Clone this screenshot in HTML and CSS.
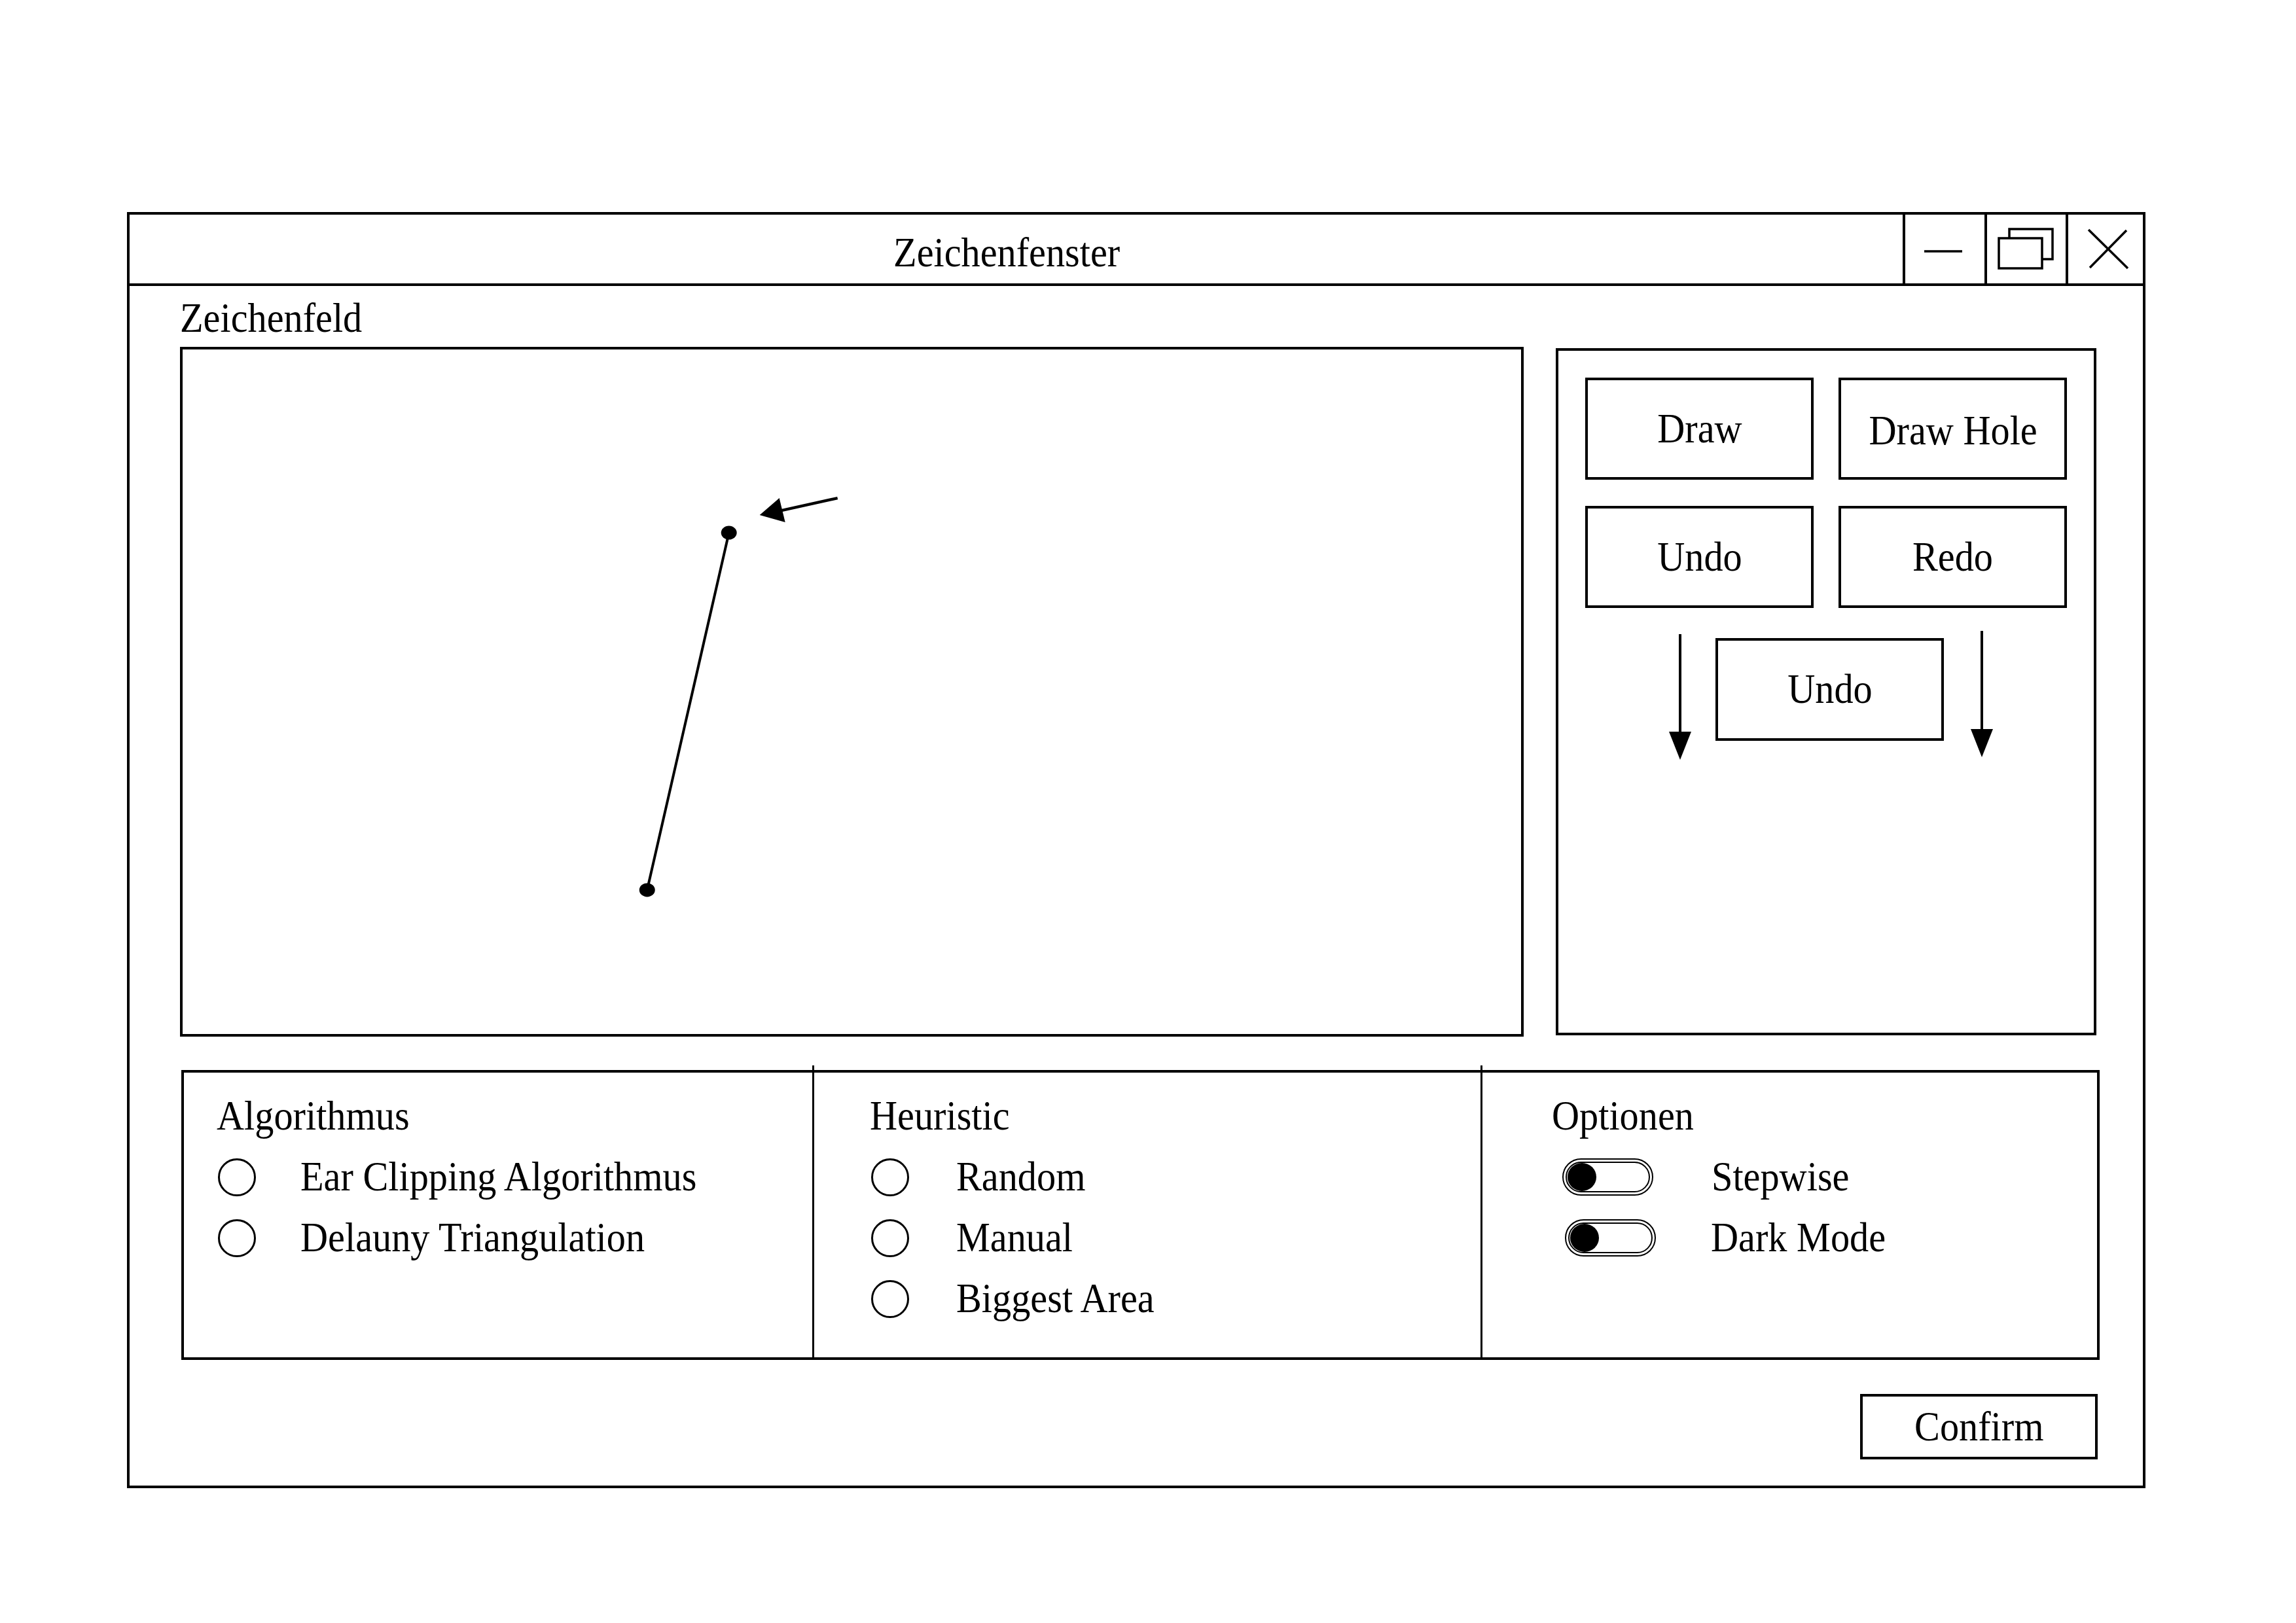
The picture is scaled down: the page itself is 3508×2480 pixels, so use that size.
FILE: index.html
```html
<!DOCTYPE html>
<html lang="de">
<head>
<meta charset="utf-8">
<title>Zeichenfenster</title>
<link rel="stylesheet" href="styles.css">
</head>
<body>
<div class="window">
  <div class="titlebar">
    <div class="title"><span class="tx">Zeichenfenster</span></div>
    <div class="tb-btn tb-min">
      <svg class="ic-min" width="58" height="4" viewBox="0 0 58 4"><line x1="0" y1="2" x2="58" y2="2" stroke="#000" stroke-width="3.5"/></svg>
    </div>
    <div class="tb-btn tb-max">
      <svg width="88" height="66" viewBox="-2 -2 88 66">
        <rect x="16" y="0" width="66" height="46" fill="#fff" stroke="#000" stroke-width="3.5"/>
        <rect x="0" y="14" width="66" height="46" fill="#fff" stroke="#000" stroke-width="3.5"/>
      </svg>
    </div>
    <div class="tb-btn tb-close">
      <svg width="64" height="63" viewBox="-2 -2 64 63">
        <line x1="0" y1="0" x2="60" y2="59" stroke="#000" stroke-width="3.5"/>
        <line x1="58" y1="1" x2="2" y2="58" stroke="#000" stroke-width="3.5"/>
      </svg>
    </div>
  </div>

  <div class="body">
    <div class="field-label"><span class="tx">Zeichenfeld</span></div>
    <div class="work-row">
      <div class="canvas">
        <svg class="drawing" viewBox="0 0 2046 1046" width="2046" height="1046">
          <line x1="835" y1="280" x2="710" y2="826" stroke="#000" stroke-width="4"/>
          <ellipse cx="835" cy="280" rx="12" ry="10.5" fill="#000"/>
          <ellipse cx="710" cy="826" rx="12" ry="10.5" fill="#000"/>
          <line x1="1001" y1="227" x2="915" y2="246" stroke="#000" stroke-width="4.5"/>
          <polygon points="882,253 921,264 912,227" fill="#000"/>
        </svg>
      </div>
      <div class="panel">
        <div class="btn-grid">
          <div class="btn"><span class="tx">Draw</span></div>
          <div class="btn btn-hole"><span class="tx">Draw Hole</span></div>
          <div class="btn"><span class="tx">Undo</span></div>
          <div class="btn"><span class="tx">Redo</span></div>
        </div>
        <div class="step-row">
          <svg class="arrow arrow-left" width="40" height="192" viewBox="0 0 40 192">
            <line x1="20" y1="0" x2="20" y2="154" stroke="#000" stroke-width="4"/>
            <polygon points="3,149 37,149 20,192" fill="#000"/>
          </svg>
          <div class="btn btn-step"><span class="tx">Undo</span></div>
          <svg class="arrow arrow-right" width="40" height="193" viewBox="0 0 40 193">
            <line x1="20" y1="0" x2="20" y2="155" stroke="#000" stroke-width="4"/>
            <polygon points="3,150 37,150 20,193" fill="#000"/>
          </svg>
        </div>
      </div>
    </div>

    <div class="options">
      <div class="section sec-algo">
        <div class="heading"><span class="tx">Algorithmus</span></div>
        <div class="rows">
          <div class="row"><span class="radio"></span><span class="tx opt">Ear Clipping Algorithmus</span></div>
          <div class="row"><span class="radio"></span><span class="tx opt">Delauny Triangulation</span></div>
        </div>
      </div>
      <div class="section sec-heur">
        <div class="heading"><span class="tx">Heuristic</span></div>
        <div class="rows">
          <div class="row"><span class="radio"></span><span class="tx opt">Random</span></div>
          <div class="row"><span class="radio"></span><span class="tx opt">Manual</span></div>
          <div class="row"><span class="radio"></span><span class="tx opt">Biggest Area</span></div>
        </div>
      </div>
      <div class="section sec-opt">
        <div class="heading"><span class="tx">Optionen</span></div>
        <div class="rows">
          <div class="row"><span class="toggle"><span class="knob"></span></span><span class="tx opt">Stepwise</span></div>
          <div class="row row-shift"><span class="toggle"><span class="knob"></span></span><span class="tx opt">Dark Mode</span></div>
        </div>
      </div>
    </div>

    <div class="footer">
      <div class="btn btn-confirm"><span class="tx">Confirm</span></div>
    </div>
  </div>
</div>
</body>
</html>
```

FILE: styles.css
```css
html, body {
  margin: 0;
  padding: 0;
  background: #fff;
}

body {
  font-family: "Liberation Serif", "Times New Roman", serif;
  font-size: 63px;
  line-height: 63px;
  color: #000;
  width: 3508px;
  height: 2480px;
  overflow: hidden;
}

.tx {
  display: inline-block;
  white-space: nowrap;
  transform: scaleX(0.925);
}

.window {
  box-sizing: border-box;
  margin: 324px 0 0 194px;
  width: 3084px;
  height: 1950px;
  border: 4px solid #000;
}

/* Title bar */
.titlebar {
  display: flex;
  box-sizing: border-box;
  height: 109px;
  border-bottom: 4px solid #000;
}

.title {
  flex: 1;
  text-align: center;
  padding-top: 27px;
  padding-right: 28px;
}

.tb-btn {
  box-sizing: border-box;
  border-left: 4px solid #000;
  display: flex;
  align-items: center;
  justify-content: center;
}

.tb-min { width: 125px; }
.tb-min svg { margin-top: 6px; margin-right: 6px; }
.tb-max { width: 124px; }
.tb-close { width: 118px; padding-left: 8px; }

/* Body */
.body {
  padding: 18px 71px 0 77px;
}

.field-label .tx,
.heading .tx,
.opt {
  transform-origin: 0 50%;
}

.work-row {
  display: flex;
  align-items: flex-start;
  gap: 49px;
  margin-top: 12px;
}

.canvas {
  position: relative;
  box-sizing: border-box;
  width: 2054px;
  height: 1054px;
  border: 4px solid #000;
}

.drawing {
  position: absolute;
  left: 0;
  top: 0;
  width: 100%;
  height: 100%;
}

.panel {
  box-sizing: border-box;
  width: 826px;
  height: 1050px;
  margin-top: 2px;
  border: 4px solid #000;
  padding: 41px 0 0 41px;
}

.btn-grid {
  display: grid;
  grid-template-columns: 349px 349px;
  column-gap: 38px;
  row-gap: 40px;
}

.btn {
  box-sizing: border-box;
  height: 156px;
  border: 4px solid #000;
  display: flex;
  align-items: center;
  justify-content: center;
}

.btn-hole .tx {
  margin-top: 6px;
}

.step-row {
  display: flex;
  align-items: flex-start;
  margin-top: 35px;
  margin-left: 125px;
}

.arrow-left { margin-top: 5px; }

.btn-step {
  width: 349px;
  height: 157px;
  margin: 11px 38px 0 34px;
}

/* Options */
.options {
  display: flex;
  box-sizing: border-box;
  width: 2931px;
  height: 443px;
  margin: 51px 0 0 2px;
  border: 4px solid #000;
}

.section {
  box-sizing: border-box;
  padding-top: 35px;
}

.sec-algo {
  width: 960px;
  padding-left: 50px;
}

.sec-heur,
.sec-opt {
  position: relative;
  border-left: 3px solid #000;
}

.sec-heur::before,
.sec-opt::before {
  content: "";
  position: absolute;
  left: -3px;
  top: -11px;
  width: 3px;
  height: 8px;
  background: #000;
}

.sec-heur {
  width: 1021px;
  padding-left: 85px;
}

.sec-opt {
  flex: 1;
  padding-left: 106px;
}

.rows {
  display: flex;
  flex-direction: column;
  gap: 30px;
  margin-top: 30px;
}

.row {
  display: flex;
  align-items: center;
  height: 63px;
  padding-left: 2px;
}

.radio {
  box-sizing: border-box;
  width: 58px;
  height: 58px;
  border: 3.5px solid #000;
  border-radius: 50%;
  flex: none;
}

.radio + .opt {
  margin-left: 68px;
}

.sec-heur .radio + .opt {
  margin-left: 72px;
}

.sec-opt .row {
  padding-left: 16px;
}

.sec-opt .row-shift {
  padding-left: 20px;
}

.sec-opt .row-shift .opt {
  margin-left: 84px;
}

.toggle {
  box-sizing: border-box;
  width: 139px;
  height: 57px;
  border: 7px double #000;
  border-radius: 29px;
  display: flex;
  align-items: center;
  padding-left: 1px;
  flex: none;
}

.knob {
  width: 44px;
  height: 43px;
  border-radius: 50%;
  background: #000;
}

.toggle + .opt {
  margin-left: 89px;
}

/* Footer */
.footer {
  display: flex;
  justify-content: flex-end;
  margin: 52px -2px 0 0;
}

.btn-confirm {
  width: 363px;
  height: 100px;
}
```
